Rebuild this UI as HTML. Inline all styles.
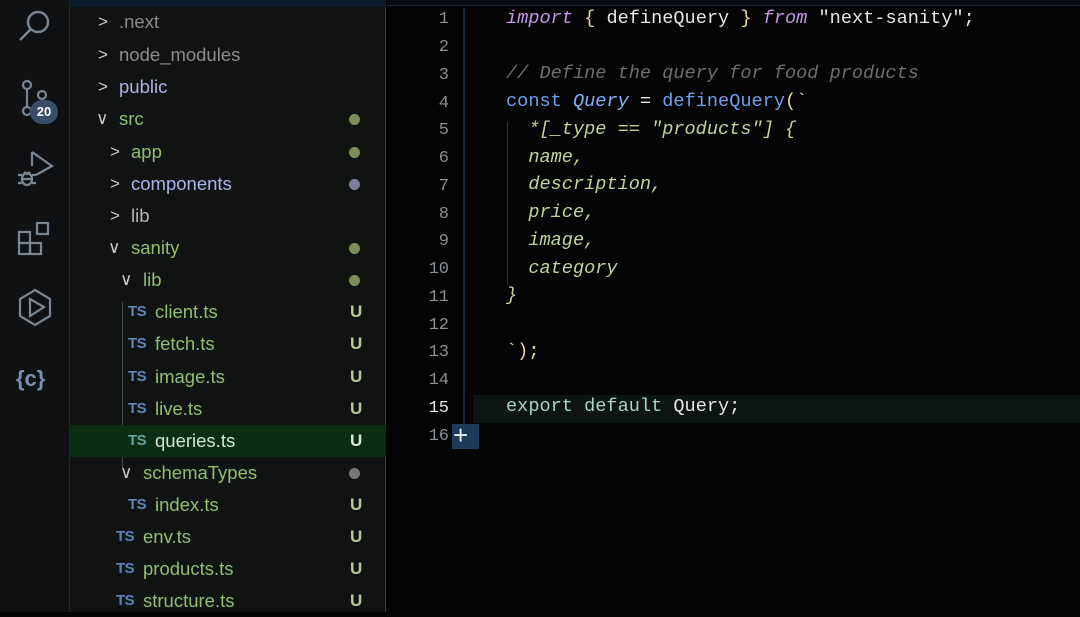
<!DOCTYPE html>
<html><head><meta charset="utf-8"><style>
*{margin:0;padding:0;box-sizing:border-box}
body{width:1080px;height:612px;overflow:hidden;background:#040404;position:relative;font-family:"Liberation Sans",sans-serif}
#act{position:absolute;left:0;top:0;width:70px;height:612px;background:#101113;border-right:1px solid #24272a}
#side{position:absolute;left:70px;top:0;width:316px;height:612px;background:#111313;border-right:1px solid #3a3d40}
#top{position:absolute;left:0;top:0;width:316px;height:7px;background:#0c1b2c}
.r{position:absolute;left:0;width:316px;height:32px;font-size:18.5px;line-height:32px;white-space:nowrap}
.r .t{position:absolute}
.ch{color:#c8c8c8;font-size:17px;position:absolute}
.dot{position:absolute;left:279px;top:11px;width:11px;height:11px;border-radius:50%;background:#7b8e5a}
.u{position:absolute;left:280px;color:#b9c79a;font-weight:bold;font-size:17px}
.ts{position:absolute;color:#5d85b5;font-weight:bold;font-size:15px;letter-spacing:-0.5px}
.g{color:#8fbf6f}
.gl{position:absolute;left:52px;top:302px;width:1px;height:166px;background:#4a4e52}
#ed{position:absolute;left:387px;top:0;right:0;bottom:0}
.ln{position:absolute;left:0;width:62px;text-align:right;font-family:"Liberation Mono",monospace;font-size:17px;color:#8a8f94}
.cd{position:absolute;left:119px;font-family:"Liberation Mono",monospace;font-size:18.6px;white-space:pre;color:#e6e6e6}
.k{color:#c795e6;font-style:italic}
.s{color:#e8d9a8}
.cm{color:#6b6f72;font-style:italic}
.b{color:#6fa0ee}
.q{color:#7fb0ff;font-style:italic}
.y{color:#bfd49a;font-style:italic}
.e{color:#a8d6c0}
svg{position:absolute}
</style></head><body>
<div id="act">
<svg style="left:15px;top:6px" width="40" height="40" viewBox="0 0 40 40" fill="none" stroke="#7b8793" stroke-width="2.4"><circle cx="23" cy="16" r="10"/><line x1="16" y1="23" x2="5" y2="34"/></svg>
<svg style="left:15px;top:76px" width="40" height="44" viewBox="0 0 40 44" fill="none" stroke="#7b8793" stroke-width="2.2"><circle cx="12" cy="9" r="4"/><circle cx="27" cy="19" r="4"/><circle cx="12" cy="35" r="4"/><line x1="12" y1="13" x2="12" y2="31"/></svg>
<div style="position:absolute;left:30px;top:100px;width:28px;height:24px;border-radius:12px;background:#3a4d68;color:#fff;font-weight:bold;font-size:13px;line-height:24px;text-align:center">20</div>
<svg style="left:14px;top:148px" width="42" height="42" viewBox="0 0 42 42" fill="none" stroke="#7b8793" stroke-width="2.2"><path d="M18 4 L38 18 L22 27"/><path d="M18 4 V18"/><ellipse cx="13" cy="31" rx="5" ry="6"/><path d="M4 27 h4 M4 35 h4 M18 27h4 M18 35h4 M8 31h10 M10 24 l3 2 l3 -2"/></svg>
<svg style="left:15px;top:218px" width="40" height="40" viewBox="0 0 40 40" fill="none" stroke="#7b8793" stroke-width="2.2"><rect x="4" y="14" width="11" height="11"/><rect x="4" y="25" width="11" height="11"/><rect x="15" y="25" width="11" height="11"/><rect x="22" y="5" width="11" height="11"/></svg>
<svg style="left:15px;top:286px" width="40" height="42" viewBox="0 0 40 42" fill="none" stroke="#7b8793" stroke-width="2.2"><path d="M20 4 L35 13 L35 30 L20 39 L5 30 L5 13 Z"/><path d="M15 13 L29 21 L15 30 Z"/></svg>
<div style="position:absolute;left:16px;top:366px;color:#7b8fae;font-weight:bold;font-size:22px">{c}</div>
</div>
<div id="side">
<div id="top"></div>
<div class="gl"></div>
<div class="r" style="top:6px"><span class="ch" style="left:28px">&gt;</span><span class="t" style="left:49px;color:#8a8a8a">.next</span></div>
<div class="r" style="top:39px"><span class="ch" style="left:28px">&gt;</span><span class="t" style="left:49px;color:#8c8c8c">node_modules</span></div>
<div class="r" style="top:71px"><span class="ch" style="left:28px">&gt;</span><span class="t" style="left:49px;color:#a9b3df">public</span></div>
<div class="r" style="top:103px"><span class="ch" style="left:26px">&#8744;</span><span class="t g" style="left:49px">src</span><span class="dot"></span></div>
<div class="r" style="top:136px"><span class="ch" style="left:40px">&gt;</span><span class="t g" style="left:61px">app</span><span class="dot"></span></div>
<div class="r" style="top:168px"><span class="ch" style="left:40px">&gt;</span><span class="t" style="left:61px;color:#aab4ea">components</span><span class="dot" style="background:#7c7f99"></span></div>
<div class="r" style="top:200px"><span class="ch" style="left:40px">&gt;</span><span class="t" style="left:61px;color:#b7b7b7">lib</span></div>
<div class="r" style="top:232px"><span class="ch" style="left:38px">&#8744;</span><span class="t g" style="left:61px">sanity</span><span class="dot"></span></div>
<div class="r" style="top:264px"><span class="ch" style="left:50px">&#8744;</span><span class="t g" style="left:73px">lib</span><span class="dot"></span></div>
<div class="r" style="top:296px"><span class="ts" style="left:58px">TS</span><span class="t g" style="left:85px">client.ts</span><span class="u">U</span></div>
<div class="r" style="top:328px"><span class="ts" style="left:58px">TS</span><span class="t g" style="left:85px">fetch.ts</span><span class="u">U</span></div>
<div class="r" style="top:361px"><span class="ts" style="left:58px">TS</span><span class="t g" style="left:85px">image.ts</span><span class="u">U</span></div>
<div class="r" style="top:393px"><span class="ts" style="left:58px">TS</span><span class="t g" style="left:85px">live.ts</span><span class="u">U</span></div>
<div class="r" style="top:425px;background:#0b2e13"><span class="ts" style="left:58px;color:#6aa0a0">TS</span><span class="t" style="left:85px;color:#cfe8d0">queries.ts</span><span class="u" style="color:#d8e8c8">U</span></div>
<div class="r" style="top:457px"><span class="ch" style="left:50px">&#8744;</span><span class="t g" style="left:73px">schemaTypes</span><span class="dot" style="background:#777"></span></div>
<div class="r" style="top:489px"><span class="ts" style="left:58px">TS</span><span class="t g" style="left:85px">index.ts</span><span class="u">U</span></div>
<div class="r" style="top:521px"><span class="ts" style="left:46px">TS</span><span class="t g" style="left:73px">env.ts</span><span class="u">U</span></div>
<div class="r" style="top:553px"><span class="ts" style="left:46px">TS</span><span class="t g" style="left:73px">products.ts</span><span class="u">U</span></div>
<div class="r" style="top:585px"><span class="ts" style="left:46px">TS</span><span class="t g" style="left:73px">structure.ts</span><span class="u">U</span></div>
</div>
<div id="ed">
<div style="position:absolute;left:0;top:0;right:0;height:6px;background:#080c12;border-bottom:1px solid #1e2630"></div>
<div style="position:absolute;left:76px;top:8px;width:2px;height:436px;background:#1a2a3e"></div>
<div style="position:absolute;left:86px;top:395px;right:0;height:28px;background:#0c1513"></div>
<div style="position:absolute;left:120px;top:122px;width:1px;height:162px;background:#333"></div>
<div style="position:absolute;left:65px;top:424px;width:27px;height:25px;background:#1d3a58"></div>
<div style="position:absolute;left:66px;top:420px;color:#e8eef5;font-size:26px;font-family:'Liberation Sans',sans-serif">+</div>
<div class="ln" style="top:10px">1</div><div class="ln" style="top:38px">2</div><div class="ln" style="top:66px">3</div><div class="ln" style="top:94px">4</div><div class="ln" style="top:121px">5</div><div class="ln" style="top:149px">6</div><div class="ln" style="top:177px">7</div><div class="ln" style="top:205px">8</div><div class="ln" style="top:232px">9</div><div class="ln" style="top:260px">10</div><div class="ln" style="top:288px">11</div><div class="ln" style="top:316px">12</div><div class="ln" style="top:343px">13</div><div class="ln" style="top:371px">14</div><div class="ln" style="top:399px;color:#e6e6e6">15</div><div class="ln" style="top:427px">16</div>
<div class="cd" style="top:8px"><span class="k">import</span> <span class="s">{</span> defineQuery <span class="s">}</span> <span class="k">from</span> "next-sanity";</div>
<div class="cd cm" style="top:63px">// Define the query for food products</div>
<div class="cd" style="top:91px"><span class="b">const</span> <span class="q">Query</span> = <span class="b">defineQuery</span><span class="s">(`</span></div>
<div class="cd y" style="top:119px">  *[_type == "products"] {</div>
<div class="cd y" style="top:147px">  name,</div>
<div class="cd y" style="top:174px">  description,</div>
<div class="cd y" style="top:202px">  price,</div>
<div class="cd y" style="top:230px">  image,</div>
<div class="cd y" style="top:258px">  category</div>
<div class="cd y" style="top:285px">}</div>
<div class="cd s" style="top:341px">`);</div>
<div class="cd" style="top:396px"><span class="e">export default</span> Query;</div>
</div>
</body></html>
